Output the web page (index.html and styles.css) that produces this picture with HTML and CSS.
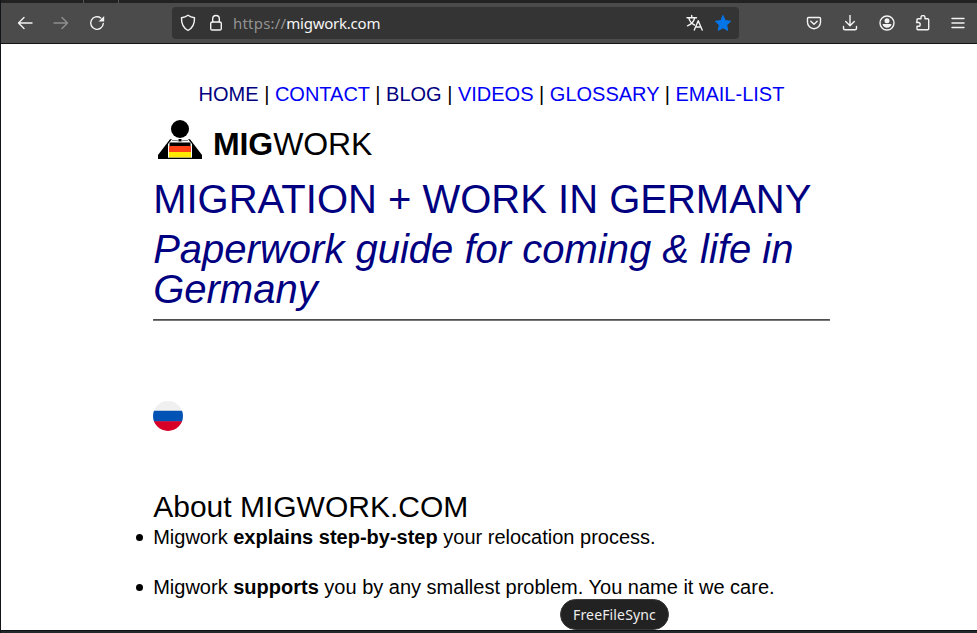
FILE: index.html
```html
<!DOCTYPE html>
<html lang="en">
<head>
<meta charset="utf-8">
<title>MIGWORK</title>
<link rel="stylesheet" href="styles.css">
</head>
<body>
<div class="window">
  <div class="tabs"><i></i><i></i></div>
  <header class="toolbar">
    <div class="buttons">
      <svg width="16" height="16" viewBox="0 0 16 16"><path d="M15 8H1.500M7 2.500 1.500 8 7 13.500"/></svg>
      <svg class="dim" width="16" height="16" viewBox="0 0 16 16"><path d="M1 8h13.500M9 2.500 14.500 8 9 13.500"/></svg>
      <svg width="16" height="16" viewBox="0 0 16 16"><path d="M14.300 8.500A6.300 6.300 0 1 1 11.800 3"/><path class="solid" d="M15.200 1v5.600H9.600z"/></svg>
    </div>
    <div class="address">
      <svg width="16" height="18" viewBox="0 0 16 18"><path d="M8 1.300C6 2.700 4 3.400 1.500 3.800 1.300 9.500 3.200 14 8 16.500 12.800 14 14.700 9.500 14.500 3.800 12 3.400 10 2.700 8 1.300z"/></svg>
      <svg class="lock" width="14" height="18" viewBox="0 0 14 18"><rect x="1.700" y="8" width="10.600" height="8" rx="1.600"/><path d="M3.700 8V4.800a3.300 3.300 0 0 1 6.600 0V8"/></svg>
      <div class="url"><span>https://</span>migwork.com</div>
      <svg class="translate" width="18" height="18" viewBox="0 0 18 18"><path d="M1 3.700h9.500M5.700 1.500v2.200M2.700 3.700c.8 3.400 3 6 5.800 7.300M8.700 3.700C8 7.400 5 10.500 1.500 11.800M8.300 16l3.900-9.300L16.200 16M9.600 13h5.300"/></svg>
      <svg class="star" width="18" height="18" viewBox="0 0 18 18"><path d="m9 1.700 2.300 4.900 5.300.7-3.900 3.700 1 5.400L9 13.800l-4.700 2.600 1-5.400-3.900-3.700 5.300-.7z"/></svg>
    </div>
    <div class="tools">
      <svg width="16" height="16" viewBox="0 0 16 16"><path d="M2.500 2.500h11q1 0 1 1v3.700a6.500 6.500 0 0 1-13 0V3.500q0-1 1-1zM4.800 6.300 8 9.300l3.200-3"/></svg>
      <svg width="16" height="16" viewBox="0 0 16 16"><path d="M8 0v10.500M3.700 6.500 8 10.700l4.300-4.200M1.500 11.500v1.700q0 1.500 1.500 1.500h10q1.500 0 1.500-1.500v-1.700"/></svg>
      <svg width="16" height="16" viewBox="0 0 16 16"><circle cx="8" cy="8" r="7"/><circle class="fill" cx="8" cy="5.800" r="2.500"/><path class="fill" d="M3.500 9h9c-.5 2.500-2.200 3.800-4.500 3.800S4 11.500 3.500 9z"/></svg>
      <svg width="16" height="16" viewBox="0 0 16 16"><path d="M2 6.200V4.800q0-1 1-1h3V2.500a2 2 0 0 1 4 0v1.300h2.700q1 0 1 1v9q0 1-1 1H3q-1 0-1-1v-2.500h1.300a1.900 1.900 0 0 0 0-3.800H1.500z"/></svg>
      <svg width="14" height="16" viewBox="0 0 14 16"><path d="M1 3.500h12M1 8h12M1 12.500h12"/></svg>
    </div>
  </header>
  <main>
    <nav><a class="visited">HOME</a> | <a>CONTACT</a> | <a class="visited">BLOG</a> | <a>VIDEOS</a> | <a>GLOSSARY</a> | <a>EMAIL-LIST</a></nav>
    <div class="brand">
      <svg width="46" height="40" viewBox="0 0 46 40">
        <circle cx="23" cy="9" r="9"/>
        <path d="M13 19.200h2L11 24v15H1v-4zM33 19.200h-2L35 24v15h10v-4z"/>
        <path d="M21.500 19h3v2h-3zM12.500 22.500h21V26h-21z"/>
        <path fill="none" stroke="#555" stroke-width=".7" d="M15 20.500h5l3 1.200 3-1.200h5"/>
        <path fill="#ff4317" d="M12 26h22v6H12z"/>
        <path fill="#ffe900" d="M12 32h22v5.500H12z"/>
        <path d="M10 37.700h26V39H10z"/>
      </svg>
      <div class="wordmark"><b>MIG</b>WORK</div>
    </div>
    <h1>MIGRATION + WORK IN GERMANY</h1>
    <p class="tagline">Paperwork guide for coming &amp; life in Germany</p>
    <hr>
    <svg class="flag" width="30" height="30" viewBox="0 0 30 30">
      <clipPath id="round"><circle cx="15" cy="15" r="15"/></clipPath>
      <g clip-path="url(#round)"><path fill="#f0f0f0" d="M0 0h30v10H0z"/><path fill="#0052b4" d="M0 9.700h30v11H0z"/><path fill="#d80027" d="M0 20.300h30V30H0z"/></g>
    </svg>
    <h2>About MIGWORK.COM</h2>
    <ul>
      <li>Migwork <b>explains step-by-step</b> your relocation process.</li>
      <li>Migwork <b>supports</b> you by any smallest problem. You name it we care.</li>
    </ul>
  </main>
  <footer></footer>
  <div class="tooltip">FreeFileSync</div>
</div>
</body>
</html>
```
FILE: styles.css
```css
* { box-sizing: border-box; }
body { margin: 0; background: #fff; font-family: "Liberation Sans", Arial, sans-serif; color: #000; }
svg { display: block; flex: none; }
.window { position: relative; display: flex; flex-direction: column; height: 633px; border-left: 1px solid #111518; overflow: hidden; }
.tabs { display: flex; flex: none; height: 3px; padding-left: 82px; gap: 34px; background: #222; }
.tabs i { width: 1px; background: #555; }
.toolbar { display: flex; flex: none; align-items: center; height: 41px; padding: 0 12px 1px 16px; background: #4b4b4b; border-bottom: 1px solid #141414; }
.toolbar svg { fill: none; stroke: #f4f4f4; stroke-width: 1.4; stroke-linecap: round; stroke-linejoin: round; }
.toolbar .dim { stroke: #8f8f8f; }
.toolbar .solid { fill: #f4f4f4; stroke: none; }
.toolbar .fill { fill: #f4f4f4; stroke: none; }
.buttons { display: flex; gap: 20px; width: 155px; }
.address { display: flex; align-items: center; width: 567px; height: 32px; padding: 0 7px 0 8px; border-radius: 4px; background: #343434; }
.address .lock { margin-left: 13px; }
.url { flex: 1; margin-left: 10px; font: 15px/20px "Noto Sans", sans-serif; color: #f6f6f6; letter-spacing: -0.24px; white-space: nowrap; }
.url span { color: #939393; letter-spacing: 0.2px; }
.address .star { margin-left: 10px; fill: #0675e8; stroke: #0675e8; stroke-width: 1; }
.tools { display: flex; justify-content: space-between; width: 159px; margin-left: auto; }
main { flex: 1; width: 677px; margin-left: 152px; padding-top: 38px; }
nav { font-size: 20px; line-height: 24px; text-align: center; white-space: nowrap; }
nav a { color: #0000f5; }
nav .visited { color: #000080; }
.brand { display: flex; height: 40px; margin: 14px 0 19px 4px; }
.wordmark { margin-left: 10px; font-size: 32px; line-height: 49px; letter-spacing: -0.1px; }
h1, .tagline { margin: 0; padding-left: 0.2px; font-size: 40px; line-height: 40px; font-weight: 400; color: #000080; }
h1 { white-space: nowrap; }
.tagline { margin-top: 10px; font-style: italic; }
hr { height: 2px; margin: 10px 0 80px; border: 1px solid #777; border-top-color: #4d4d4d; }
h2 { margin: 59px 0 1px; padding-left: 0.2px; font-size: 30px; font-weight: 400; line-height: 34px; }
ul { margin: 0 0 0 -18px; padding: 0; list-style: none; font-size: 20px; line-height: 24px; }
li { display: flex; align-items: center; white-space: pre; }
li::before { content: ""; width: 7px; height: 7px; margin: 1px 10.200px 0 1px; border-radius: 50%; background: #000; }
li + li { margin-top: 26px; }
footer { height: 3px; flex: none; background: #20292c; border-top: 1px solid #111; }
.tooltip { position: absolute; left: 559px; top: 599px; width: 109px; height: 31px; border: 1px solid #393939; border-radius: 16px; background: #222; color: #eee; font: 14px/29px "Noto Sans", sans-serif; letter-spacing: 0.15px; text-align: center; }
```
